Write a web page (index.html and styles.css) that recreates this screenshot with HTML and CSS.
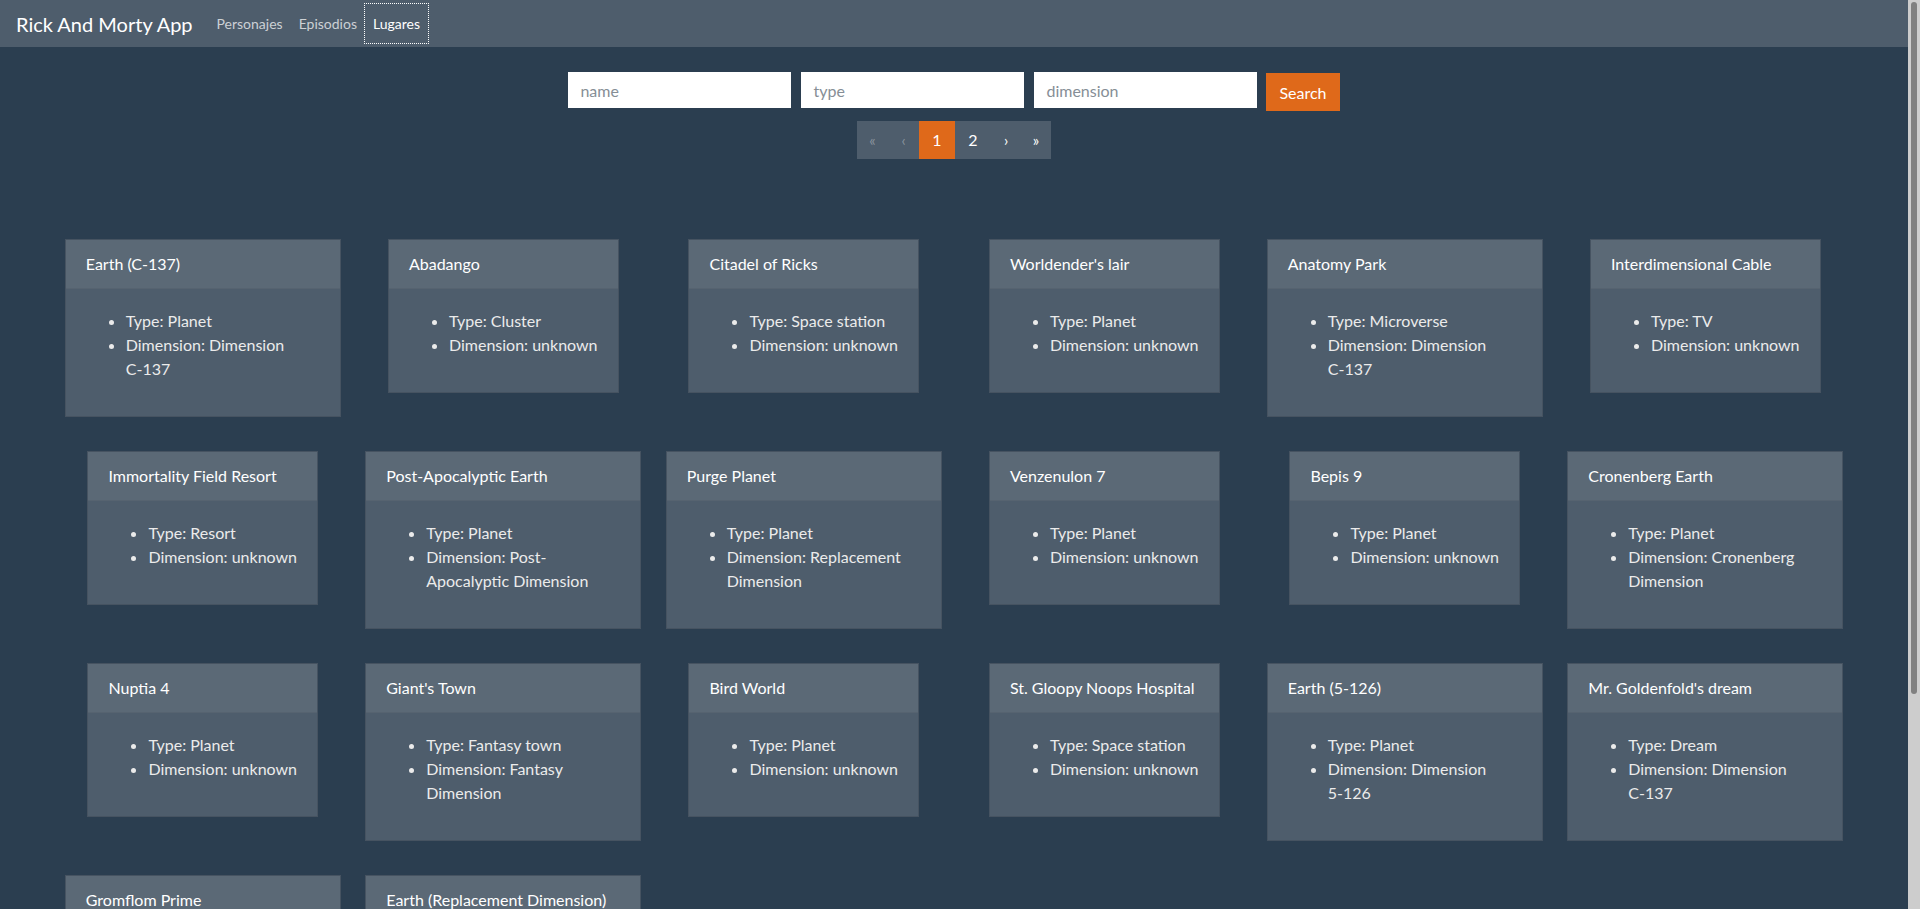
FILE: index.html
```html
<!DOCTYPE html>
<html lang="es">
<head>
<meta charset="utf-8">
<title>Rick And Morty App</title>
<link rel="stylesheet" href="styles.css">
</head>
<body>
<nav class="navbar">
  <a class="brand" href="#">Rick And Morty App</a>
  <ul class="nav">
    <li><a class="nav-link" href="#">Personajes</a></li>
    <li><a class="nav-link" href="#">Episodios</a></li>
    <li><a class="nav-link active" href="#">Lugares</a></li>
  </ul>
</nav>

<main class="main">
  <form class="search">
    <input class="field" type="text" placeholder="name">
    <input class="field" type="text" placeholder="type">
    <input class="field" type="text" placeholder="dimension">
    <button class="btn" type="button">Search</button>
  </form>

  <ul class="pagination">
    <li class="page disabled">«</li>
    <li class="page disabled">‹</li>
    <li class="page num active">1</li>
    <li class="page num">2</li>
    <li class="page">›</li>
    <li class="page">»</li>
  </ul>

  <section class="grid">
    <div class="card wide"><div class="card-header">Earth (C-137)</div><div class="card-body"><ul><li>Type: Planet</li><li>Dimension: Dimension C-137</li></ul></div></div>
    <div class="card"><div class="card-header">Abadango</div><div class="card-body"><ul><li>Type: Cluster</li><li>Dimension: unknown</li></ul></div></div>
    <div class="card"><div class="card-header">Citadel of Ricks</div><div class="card-body"><ul><li>Type: Space station</li><li>Dimension: unknown</li></ul></div></div>
    <div class="card"><div class="card-header">Worldender's lair</div><div class="card-body"><ul><li>Type: Planet</li><li>Dimension: unknown</li></ul></div></div>
    <div class="card wide"><div class="card-header">Anatomy Park</div><div class="card-body"><ul><li>Type: Microverse</li><li>Dimension: Dimension C-137</li></ul></div></div>
    <div class="card"><div class="card-header">Interdimensional Cable</div><div class="card-body"><ul><li>Type: TV</li><li>Dimension: unknown</li></ul></div></div>

    <div class="card"><div class="card-header">Immortality Field Resort</div><div class="card-body"><ul><li>Type: Resort</li><li>Dimension: unknown</li></ul></div></div>
    <div class="card wide"><div class="card-header">Post-Apocalyptic Earth</div><div class="card-body"><ul><li>Type: Planet</li><li>Dimension: Post-Apocalyptic Dimension</li></ul></div></div>
    <div class="card wide"><div class="card-header">Purge Planet</div><div class="card-body"><ul><li>Type: Planet</li><li>Dimension: Replacement Dimension</li></ul></div></div>
    <div class="card"><div class="card-header">Venzenulon 7</div><div class="card-body"><ul><li>Type: Planet</li><li>Dimension: unknown</li></ul></div></div>
    <div class="card"><div class="card-header">Bepis 9</div><div class="card-body"><ul><li>Type: Planet</li><li>Dimension: unknown</li></ul></div></div>
    <div class="card wide"><div class="card-header">Cronenberg Earth</div><div class="card-body"><ul><li>Type: Planet</li><li>Dimension: Cronenberg Dimension</li></ul></div></div>

    <div class="card"><div class="card-header">Nuptia 4</div><div class="card-body"><ul><li>Type: Planet</li><li>Dimension: unknown</li></ul></div></div>
    <div class="card wide"><div class="card-header">Giant's Town</div><div class="card-body"><ul><li>Type: Fantasy town</li><li>Dimension: Fantasy Dimension</li></ul></div></div>
    <div class="card"><div class="card-header">Bird World</div><div class="card-body"><ul><li>Type: Planet</li><li>Dimension: unknown</li></ul></div></div>
    <div class="card"><div class="card-header">St. Gloopy Noops Hospital</div><div class="card-body"><ul><li>Type: Space station</li><li>Dimension: unknown</li></ul></div></div>
    <div class="card wide"><div class="card-header">Earth (5-126)</div><div class="card-body"><ul><li>Type: Planet</li><li>Dimension: Dimension 5-126</li></ul></div></div>
    <div class="card wide"><div class="card-header">Mr. Goldenfold's dream</div><div class="card-body"><ul><li>Type: Dream</li><li>Dimension: Dimension C-137</li></ul></div></div>

    <div class="card wide"><div class="card-header">Gromflom Prime</div><div class="card-body"><ul><li>Type: Planet</li><li>Dimension: Replacement Dimension</li></ul></div></div>
    <div class="card wide"><div class="card-header">Earth (Replacement Dimension)</div><div class="card-body"><ul><li>Type: Planet</li><li>Dimension: Replacement Dimension</li></ul></div></div>
  </section>
</main>

<div class="scrollbar" aria-hidden="true"><div class="scrollbar-thumb"></div></div>
</body>
</html>
```

FILE: styles.css
```css
* { box-sizing: border-box; }

body {
  margin: 0 12px 0 0;
  background: #2b3e50;
  color: #ebebeb;
  font-family: Lato, "Open Sans", "Liberation Sans", sans-serif;
  font-size: 16px;
  line-height: 1.5;
}

.navbar {
  height: 47px;
  background: #4e5d6c;
  display: flex;
  align-items: center;
  padding: 0 16px;
}

.brand {
  color: #fff;
  text-decoration: none;
  font-size: 20px;
  line-height: 30px;
  margin-right: 16px;
}

.nav {
  list-style: none;
  margin: 0;
  padding: 0;
  display: flex;
}

.nav-link {
  display: block;
  padding: 9px 8px;
  font-size: 14px;
  line-height: 21px;
  color: rgba(255, 255, 255, 0.72);
  text-decoration: none;
}

.nav-link.active {
  color: #fff;
  outline: 1px dotted #fff;
  outline-offset: 0;
}

.main {
  padding-top: 25px;
  padding-bottom: 140px;
}

.search {
  display: flex;
  justify-content: center;
  align-items: flex-start;
  margin: 0;
}

.field {
  width: 223px;
  height: 36px;
  border: 0;
  border-radius: 0;
  background: #fff;
  margin-right: 10px;
  padding: 6px 12px;
  font-family: inherit;
  font-size: 16px;
  color: #495057;
}

.field:last-of-type { margin-right: 9px; }

.field::placeholder { color: #868e96; }

.btn {
  height: 38px;
  margin-top: 1px;
  padding: 0 13px;
  border: 0;
  border-radius: 0;
  background: #df691a;
  color: #fff;
  font-family: inherit;
  font-size: 16px;
}

.pagination {
  list-style: none;
  display: flex;
  justify-content: center;
  margin: 10px 0 0;
  padding: 0;
}

.page {
  height: 38px;
  width: 30px;
  background: #4e5d6c;
  color: #fff;
  display: flex;
  align-items: center;
  justify-content: center;
  font-size: 15px;
}

.page.disabled {
  width: 31px;
  color: #8a949e;
}

.page.num {
  width: 36px;
  font-size: 16px;
}

.page.active { background: #df691a; }

.grid {
  display: grid;
  grid-template-columns: repeat(6, 300.5px);
  justify-content: center;
  justify-items: center;
  align-items: start;
  row-gap: 34px;
  margin: 80px 0 0;
}

.card {
  width: fit-content;
  max-width: 276px;
  background: #4e5d6c;
  border: 1px solid rgba(0, 0, 0, 0.1);
}

.card.wide { width: 276px; }

.card-header {
  padding: 12px 20px;
  background: rgba(255, 255, 255, 0.075);
  border-bottom: 1px solid rgba(0, 0, 0, 0.05);
  color: #fff;
}

.card-body {
  padding: 20px;
}

.card-body ul {
  margin: 0 0 15px;
  padding-left: 40px;
}

.card.wide .card-body ul { padding-right: 18px; }

.scrollbar {
  position: fixed;
  top: 0;
  right: 0;
  width: 12px;
  height: 100vh;
  background: #cdcdcd;
}

.scrollbar-thumb {
  position: absolute;
  top: 2px;
  left: 3px;
  width: 6px;
  height: 692px;
  border-radius: 3px;
  background: #808080;
}
```
